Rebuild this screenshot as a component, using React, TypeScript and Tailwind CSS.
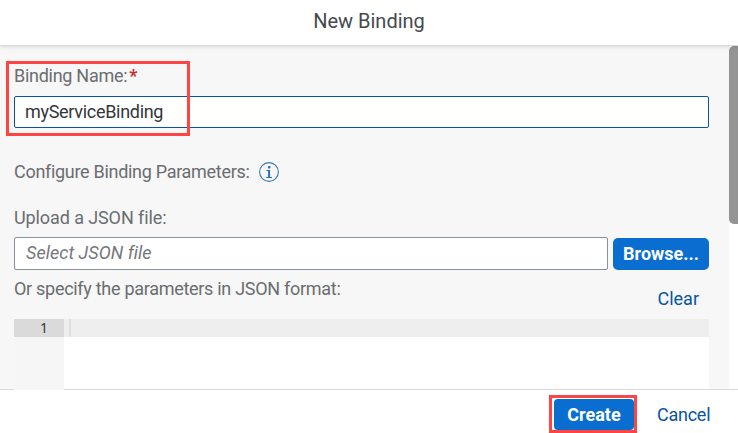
function InfoIcon() {
  return (
    <svg className="ml-[9px] size-5 shrink-0" viewBox="0 0 20 20" fill="none" aria-hidden="true">
      <circle cx="10" cy="10" r="9.4" stroke="#3a79b8" strokeWidth="1.1" />
      <rect x="9" y="4" width="2.4" height="2.4" rx="0.6" fill="#2f6fb0" />
      <path d="M7.3 8.5H11M7.2 15.5H13" stroke="#2f6fb0" strokeWidth="1" />
      <path d="M10.1 8V15.5" stroke="#2f6fb0" strokeWidth="2" />
    </svg>
  );
}

export default function App() {
  return (
    <div className="relative flex h-[433px] w-[738px] flex-col overflow-hidden bg-white font-[Roboto,'Liberation_Sans',sans-serif] text-[18px] leading-[22px] text-[#6a6d70]">
      <header className="z-10 flex h-[46px] shrink-0 justify-center border-b border-[#d9d9d9] bg-white pt-[9px] shadow-[0_1px_4px_rgba(0,0,0,0.12)]">
        <h1 className="text-[20px] leading-6 text-[#45494d]">New Binding</h1>
      </header>

      <main className="flex h-[344px] shrink-0 overflow-hidden">
        <div className="flex w-[729px] shrink-0 flex-col bg-[#f7f7f7] px-[14px] pt-[19px] pr-5">
          <label className="flex h-[22px] whitespace-nowrap">
            <span className="tracking-[-0.28px]">Binding Name:</span>
            <span className="ml-[2px] font-bold text-[#c8302d]">*</span>
          </label>
          <div className="mt-[9px] flex h-8 shrink-0 items-center rounded-[2px] border border-[#0854a0] bg-white pl-[10px] tracking-[-0.3px] text-[#32363a]">
            myServiceBinding
          </div>
          <div className="mt-[33px] flex h-[22px] items-center whitespace-nowrap">
            <span className="tracking-[-0.3px]">Configure Binding Parameters:</span>
            <InfoIcon />
          </div>
          <div className="mt-6 h-[22px] whitespace-nowrap tracking-[-0.1px]">Upload a JSON file:</div>
          <div className="mt-[8px] flex h-[33px] shrink-0 gap-[5px]">
            <div className="flex w-[594px] items-center rounded-[2px] border border-[#89919a] bg-white pb-px pl-[11px] tracking-[0.03px] text-[#74777a] italic">
              Select JSON file
            </div>
            <button className="mt-px flex h-8 w-24 items-center justify-center rounded-[5px] bg-[#0a6ed1] font-bold text-white">
              Browse...
            </button>
          </div>
          <div className="flex h-[49px] shrink-0 justify-between pt-2 pr-[10px] whitespace-nowrap">
            <span className="tracking-[-0.29px]">Or specify the parameters in JSON format:</span>
            <span className="pt-[10px] text-[#0854a0]">Clear</span>
          </div>
          <div className="flex h-[71px] shrink-0 bg-white">
            <div className="z-10 w-[50px] bg-[#f6f6f6]">
              <div className="h-[18px] bg-[#dadada] pr-4 text-right font-['Noto_Sans',sans-serif] text-[14px] leading-[18px] text-[#32363a]">1</div>
            </div>
            <div className="h-[18px] flex-1 bg-[#eeeeee] pl-[5px]">
              <div className="h-full w-[2px] bg-[#e0e0e0]" />
            </div>
          </div>
        </div>
        <div className="flex-1 overflow-hidden bg-white">
          <div className="h-[178px] w-[18px] rounded-[5px] bg-[#949494]" />
        </div>
      </main>

      <footer className="-mt-px flex h-11 shrink-0 border-t border-[#d9d9d9] pt-[9px] pl-[554px]">
        <button className="flex h-[31px] w-20 items-center justify-center rounded-[4px] bg-[#0a6ed1] font-bold text-white">Create</button>
        <button className="ml-[23px] h-[31px] tracking-[-0.25px] text-[#0854a0]">Cancel</button>
      </footer>

      <div className="pointer-events-none absolute top-[61px] left-[6px] z-20 h-[75px] w-[184px] border-3 border-[#ff4444]" />
      <div className="pointer-events-none absolute top-[395px] left-[549px] z-20 h-[38px] w-[88px] border-3 border-[#ff4444]" />
    </div>
  );
}
